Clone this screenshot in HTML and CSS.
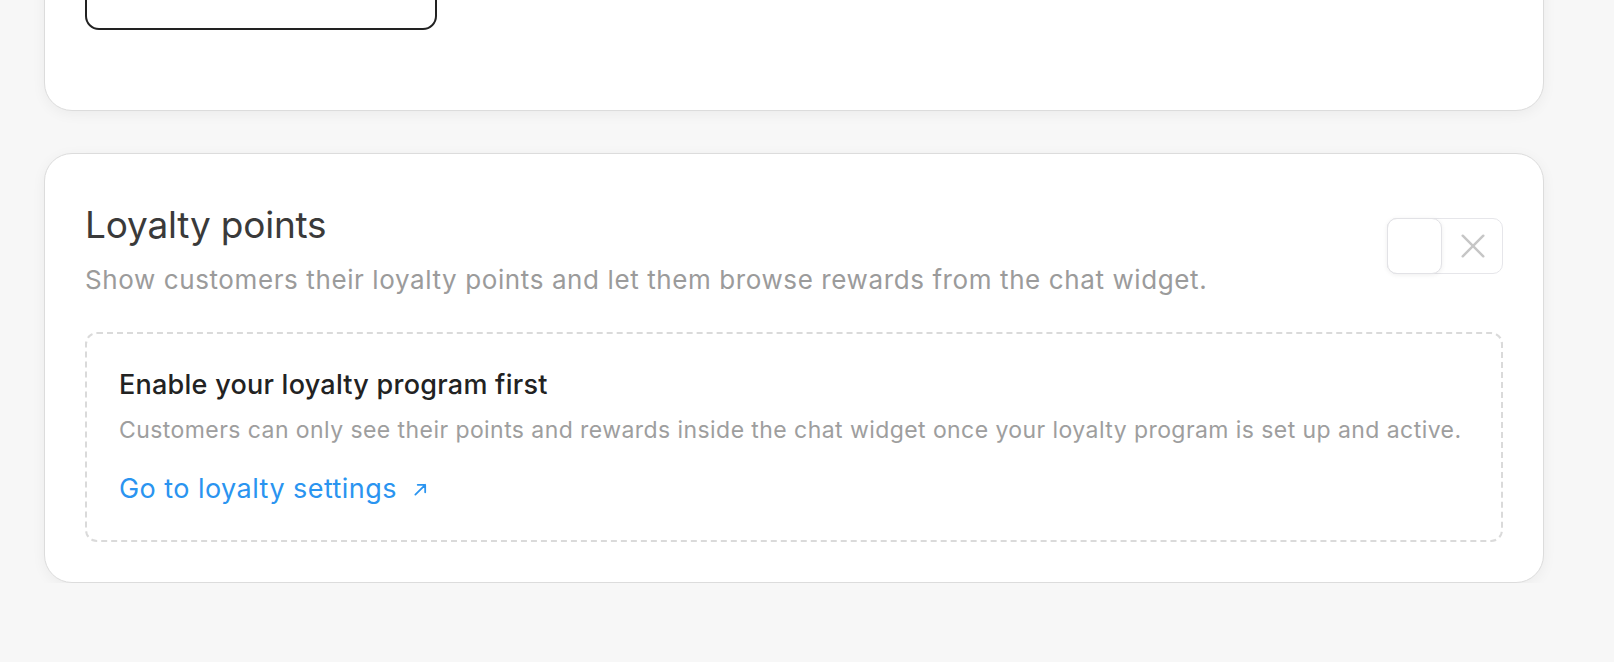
FILE: index.html
```html
<!DOCTYPE html>
<html lang="en">
<head>
<meta charset="utf-8">
<title>Loyalty points</title>
<link rel="stylesheet" href="styles.css">
</head>
<body>
<main class="page">
  <section class="card card-top">
    <button class="outline-btn" type="button">
      <svg class="btn-icon" viewBox="0 0 24 24" width="22" height="22" aria-hidden="true"><path d="M12 5v14M5 12h14" fill="none" stroke="#222" stroke-width="2" stroke-linecap="round"/></svg>
      <span>Add custom field</span>
    </button>
  </section>

  <section class="card">
    <div class="card-head">
      <div class="head-text">
        <h2 class="title">Loyalty points</h2>
        <p class="desc">Show customers their loyalty points and let them browse rewards from the chat widget.</p>
      </div>
      <div class="toggle" role="switch" aria-checked="false">
        <span class="knob"></span>
        <svg class="toggle-x" viewBox="0 0 24 24" width="26" height="26" aria-hidden="true"><path d="M2.5 2.5L21.5 21.5M21.5 2.5L2.5 21.5" fill="none" stroke="#c6c6c6" stroke-width="2.3" stroke-linecap="round"/></svg>
      </div>
    </div>

    <div class="notice">
      <h3 class="notice-title">Enable your loyalty program first</h3>
      <p class="notice-text">Customers can only see their points and rewards inside the chat widget once your loyalty program is set up and active.</p>
      <a class="notice-link" href="#">Go to loyalty settings
        <svg class="link-arrow" viewBox="0 0 16 16" width="15" height="15" aria-hidden="true"><path d="M2.5 13.5L13 3M5 3h8v8" fill="none" stroke="currentColor" stroke-width="1.9" stroke-linecap="round" stroke-linejoin="round"/></svg>
      </a>
    </div>
  </section>
</main>
</body>
</html>
```

FILE: styles.css
```css
* { box-sizing: border-box; }

html, body {
  margin: 0;
  padding: 0;
  background: #f7f7f7;
  font-family: Inter, "Noto Sans", "Liberation Sans", sans-serif;
  overflow: hidden;
}

.page {
  width: 1500px;
  margin-left: 44px;
  display: flex;
  flex-direction: column;
  gap: 42px;
}

.card {
  background: #fff;
  border: 1.5px solid #dcdcdc;
  border-radius: 28px;
  box-shadow: 0 3px 14px rgba(0, 0, 0, 0.05);
  padding: 40px;
}

.card-top {
  margin-top: -79px;
  padding-bottom: 80px;
}

.outline-btn {
  display: flex;
  align-items: flex-start;
  gap: 18px;
  width: 352px;
  height: 68px;
  padding: 12px 0 0 40px;
  border: 2px solid #222;
  border-radius: 14px;
  background: #fff;
  font-family: inherit;
  font-size: 24px;
  color: #a8a8a8;
}

.card-head {
  display: flex;
  justify-content: space-between;
  align-items: flex-start;
}

.title {
  margin: 9px 0 0 0;
  font-size: 37px;
  line-height: 44px;
  font-weight: 400;
  color: #3a3a3a;
  letter-spacing: -0.2px;
}

.desc {
  margin: 16px 0 0 0;
  font-size: 26px;
  line-height: 34px;
  color: #9b9b9b;
  letter-spacing: 0.6px;
}

.toggle {
  position: relative;
  margin-top: 24px;
  width: 116px;
  height: 56px;
  border: 1.5px solid #e6e6ea;
  border-radius: 10px;
  background: #fff;
  display: flex;
  align-items: center;
  justify-content: flex-end;
  padding-right: 16px;
  flex-shrink: 0;
}

.knob {
  position: absolute;
  left: -1.5px;
  top: -1.5px;
  width: 55px;
  height: 56px;
  border: 1.5px solid #e2e2e6;
  border-radius: 10px;
  background: #fff;
  box-shadow: 0 1px 5px rgba(0, 0, 0, 0.07);
}

.toggle-x { display: block; }

.notice {
  margin-top: 35px;
  border: 2px dashed #dadada;
  border-radius: 12px;
  padding: 31px 32px 33px 32px;
}

.notice-title {
  margin: 0;
  font-size: 27px;
  line-height: 40px;
  font-weight: 500;
  color: #222;
  letter-spacing: 0.25px;
}

.notice-text {
  margin: 9px 0 0 0;
  font-size: 23px;
  line-height: 32px;
  color: #9e9e9e;
  letter-spacing: 0.43px;
}

.notice-link {
  margin-top: 25px;
  display: inline-flex;
  align-items: center;
  gap: 16px;
  font-size: 27px;
  line-height: 36px;
  color: #2a94f0;
  text-decoration: none;
  letter-spacing: 0.45px;
}

.link-arrow { display: block; }
```
